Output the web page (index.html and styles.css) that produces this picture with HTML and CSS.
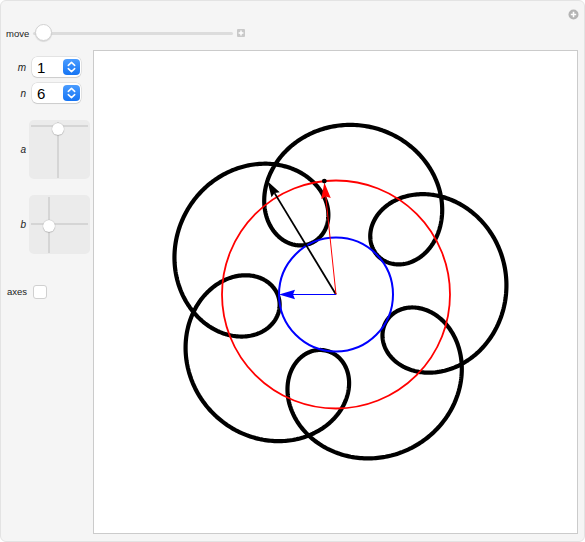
FILE: index.html
```html
<!DOCTYPE html>
<html lang="en">
<head>
    <meta charset="UTF-8">
    <title>Rotating Vectors</title>
    <link rel="stylesheet" href="styles.css">
</head>
<body>

<div class="panel">
    <!-- options button, top right -->
    <span class="options-btn">
        <svg width="11" height="11" viewBox="0 0 11 11"><circle cx="5.5" cy="5.5" r="5" fill="#b4b4b4"/><path d="M5.5 2.8v5.4M2.8 5.5h5.4" stroke="#fff" stroke-width="1.6"/></svg>
    </span>

    <!-- move slider -->
    <div class="move-row">
        <span class="lbl">move</span>
        <div class="slider">
            <div class="track"></div>
            <div class="knob"></div>
        </div>
        <span class="plus-sq">
            <svg width="8" height="8" viewBox="0 0 8 8"><rect width="8" height="8" rx="1" fill="#c9c9c9"/><path d="M4 1.6v4.8M1.6 4h4.8" stroke="#fff" stroke-width="1.4"/></svg>
        </span>
    </div>

    <div class="main">
        <div class="controls">
            <div class="pick">
                <span class="var">m</span>
                <div class="popup">
                    <span class="val">1</span>
                    <span class="stepper"><svg width="17" height="16" viewBox="0 0 17 16"><path d="M5.3 6.4L8.5 3.4l3.2 3M5.3 9.6l3.2 3 3.2-3" fill="none" stroke="#fff" stroke-width="1.5" stroke-linecap="round" stroke-linejoin="round"/></svg></span>
                </div>
            </div>
            <div class="pick gap-lg">
                <span class="var">n</span>
                <div class="popup">
                    <span class="val">6</span>
                    <span class="stepper"><svg width="17" height="16" viewBox="0 0 17 16"><path d="M5.3 6.4L8.5 3.4l3.2 3M5.3 9.6l3.2 3 3.2-3" fill="none" stroke="#fff" stroke-width="1.5" stroke-linecap="round" stroke-linejoin="round"/></svg></span>
                </div>
            </div>

            <div class="pad-row">
                <span class="var">a</span>
                <div class="pad">
                    <div class="hline a-h"></div>
                    <div class="vline a-v"></div>
                    <div class="dot a-dot"></div>
                </div>
            </div>
            <div class="pad-row gap-xl">
                <span class="var">b</span>
                <div class="pad">
                    <div class="hline b-h"></div>
                    <div class="vline b-v"></div>
                    <div class="dot b-dot"></div>
                </div>
            </div>

            <div class="check-row">
                <span class="lbl">axes</span>
                <span class="checkbox"></span>
            </div>
        </div>

        <div class="plot">
            <svg id="graph" width="483" height="482" viewBox="0 0 483 482"></svg>
        </div>
    </div>
</div>

<script>
    // curve: z = R e^(i s) + r e^(i (6 s + c))
    const cx = 242, cy = 243.5;
    const R = 114, r = 57;
    const c = -35.2 * Math.PI / 180;
    const s0 = 95.87 * Math.PI / 180;
    const NS = 'http://www.w3.org/2000/svg';
    const svg = document.getElementById('graph');

    function el(name, attrs) {
        const e = document.createElementNS(NS, name);
        for (const k in attrs) e.setAttribute(k, attrs[k]);
        svg.appendChild(e);
        return e;
    }

    function pointAt(s) {
        return [
            cx + R * Math.cos(s) + r * Math.cos(6 * s + c),
            cy - (R * Math.sin(s) + r * Math.sin(6 * s + c))
        ];
    }

    let d = '';
    for (let k = 0; k <= 1440; k++) {
        const p = pointAt(k * Math.PI / 720);
        d += (k ? 'L' : 'M') + p[0].toFixed(2) + ' ' + p[1].toFixed(2);
    }
    el('path', { d: d + 'Z', fill: 'none', stroke: '#000', 'stroke-width': 4.2, 'stroke-linejoin': 'round' });

    el('circle', { cx, cy, r: R, fill: 'none', stroke: '#ff0000', 'stroke-width': 1.8 });
    el('circle', { cx, cy, r: r, fill: 'none', stroke: '#0000ff', 'stroke-width': 2 });

    function arrow(x2, y2, color, width) {
        const dx = x2 - cx, dy = y2 - cy;
        const len = Math.hypot(dx, dy);
        const ux = dx / len, uy = dy / len;
        const L = 16, W = 4.8, N = 14;
        el('line', { x1: cx, y1: cy, x2: x2 - ux * N, y2: y2 - uy * N, stroke: color, 'stroke-width': width });
        const bx = x2 - ux * L, by = y2 - uy * L;
        const nx = x2 - ux * N, ny = y2 - uy * N;
        const pts = [
            [x2, y2],
            [bx - uy * W, by + ux * W],
            [nx, ny],
            [bx + uy * W, by - ux * W]
        ].map(p => p[0].toFixed(2) + ',' + p[1].toFixed(2)).join(' ');
        el('polygon', { points: pts, fill: color });
    }

    const red = [cx + R * Math.cos(s0), cy - R * Math.sin(s0)];
    const blueAng = 6 * s0 + c;
    const blue = [cx + r * Math.cos(blueAng), cy - r * Math.sin(blueAng)];
    const pen = pointAt(s0);

    arrow(pen[0], pen[1], '#000', 1.8);
    arrow(red[0], red[1] + 1.5, '#ff0000', 1);
    arrow(blue[0], blue[1], '#0000ff', 1.2);
    el('circle', { cx: red[0], cy: red[1], r: 2.4, fill: '#000' });
</script>

</body>
</html>
```

FILE: styles.css
```css
body {
    margin: 0;
    font-family: "Liberation Sans", Arial, sans-serif;
}
.panel {
    position: relative;
    width: 585px;
    height: 542px;
    box-sizing: border-box;
    padding: 23px 6px 0 5px;
    background-color: #f5f5f5;
    border: 1px solid #e3e3e3;
    border-radius: 6px;
}
.options-btn {
    position: absolute;
    top: 8px;
    right: 5px;
    width: 11px;
    height: 11px;
}
.options-btn svg,
.plus-sq svg,
.stepper svg {
    display: block;
}
.lbl {
    font-size: 9.5px;
    color: #222;
}
.move-row {
    display: flex;
    align-items: center;
    height: 18px;
}
.move-row .lbl {
    width: 25px;
}
.slider {
    position: relative;
    width: 200px;
    height: 18px;
    margin-left: 2px;
}
.track {
    margin-top: 8px;
    height: 3px;
    border-radius: 2px;
    background-color: #dcdcdc;
}
.knob {
    position: absolute;
    top: 0;
    left: 2px;
    width: 17px;
    height: 17px;
    box-sizing: border-box;
    border-radius: 50%;
    background-color: #fff;
    border: 1px solid #d2d2d2;
    box-shadow: 0 1px 1px rgba(0, 0, 0, 0.12);
}
.plus-sq {
    margin-left: 4px;
}
.main {
    display: flex;
    margin-top: 8px;
}
.controls {
    width: 87px;
    padding-top: 7px;
}
.var {
    width: 20px;
    text-align: right;
    font-size: 10px;
    font-style: italic;
    color: #222;
}
.pick {
    display: flex;
    align-items: center;
    height: 20px;
    margin-bottom: 6px;
}
.pick.gap-lg {
    margin-bottom: 17px;
}
.popup {
    display: flex;
    align-items: center;
    justify-content: space-between;
    width: 49px;
    height: 20px;
    margin-left: 6px;
    box-sizing: border-box;
    padding: 0 1px 0 5px;
    background-color: #fff;
    border-radius: 5px;
    box-shadow: 0 0 0 0.5px rgba(0, 0, 0, 0.14), 0 1px 1px rgba(0, 0, 0, 0.1);
}
.val {
    font-size: 15px;
    color: #000;
}
.stepper {
    width: 17px;
    height: 16px;
    border-radius: 4px;
    background: linear-gradient(#4a9cff, #1574f4);
}
.pad-row {
    display: flex;
    align-items: center;
    height: 59px;
    margin-bottom: 16px;
}
.pad-row.gap-xl {
    margin-bottom: 30px;
}
.pad {
    position: relative;
    width: 61px;
    height: 59px;
    margin-left: 3px;
    border-radius: 5px;
    background-color: #ebebeb;
}
.hline {
    position: absolute;
    left: 2px;
    right: 2px;
    height: 2px;
    background-color: #d5d5d5;
}
.vline {
    position: absolute;
    top: 2px;
    bottom: 1px;
    width: 2px;
    background-color: #d5d5d5;
}
.dot {
    position: absolute;
    width: 12px;
    height: 12px;
    border-radius: 50%;
    background-color: #fff;
    box-shadow: 0 0 1px rgba(0, 0, 0, 0.35), 0 1px 1px rgba(0, 0, 0, 0.12);
}
.a-h { top: 5px; }
.a-v { left: 27.5px; }
.a-dot { left: 22.5px; top: 3px; }
.b-h { top: 27.5px; }
.b-v { left: 18.5px; }
.b-dot { left: 13.5px; top: 25px; }
.check-row {
    display: flex;
    align-items: center;
    height: 15px;
}
.check-row .lbl {
    width: 20px;
    margin-left: 1px;
}
.checkbox {
    width: 14px;
    height: 14px;
    margin-left: 6px;
    box-sizing: border-box;
    border-radius: 3px;
    background-color: #fff;
    border: 1px solid #d0d0d0;
}
.plot {
    width: 485px;
    height: 484px;
    box-sizing: border-box;
    background-color: #fff;
    border: 1px solid #cbcbcb;
}
.plot svg {
    display: block;
}
```
